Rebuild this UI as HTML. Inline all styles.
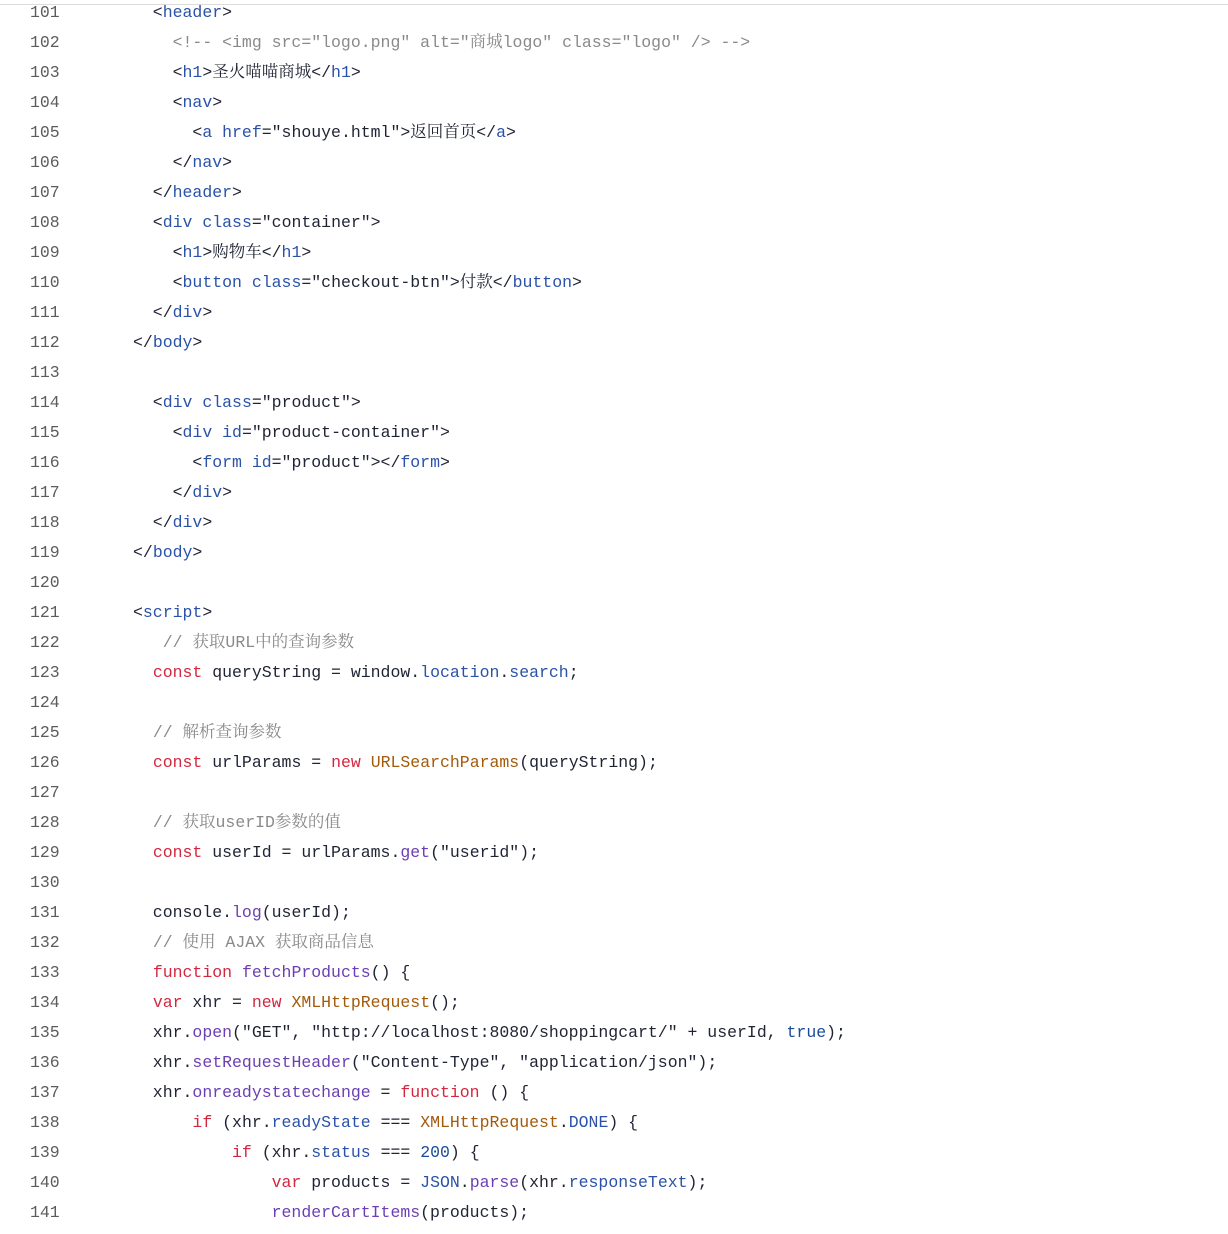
<!DOCTYPE html>
<html><head><meta charset="utf-8"><style>
body{margin:0;background:#fff;width:1228px;height:1234px;overflow:hidden;position:relative}
.top{position:absolute;left:0;top:4px;width:1228px;height:1px;background:#dcdcdc}
.code{position:absolute;left:0;top:-2px;font-family:"Liberation Mono","Noto Serif CJK SC",monospace;font-size:16.5px;line-height:30px;color:#1f2333}
.l{white-space:pre;height:30px}
.n{display:inline-block;width:133px;padding-left:30px;box-sizing:border-box;color:#5c5c5c;font-family:"Liberation Mono",monospace}
.t{color:#2a52a8}.k{color:#d3273f}.c{color:#8a8a8a}.p{color:#2a52a8}.f{color:#6b3fb3}.o{color:#a35a0a}.s{color:#1f2333}.m{color:#1a4a9a}
</style></head><body><div class="top"></div><div class="code">
<div class="l"><span class="n">101</span>  &lt;<span class="t">header</span>&gt;</div>
<div class="l"><span class="n">102</span>    <span class="c">&lt;!-- &lt;img src="logo.png" alt="商城logo" class="logo" /&gt; --&gt;</span></div>
<div class="l"><span class="n">103</span>    &lt;<span class="t">h1</span>&gt;圣火喵喵商城&lt;/<span class="t">h1</span>&gt;</div>
<div class="l"><span class="n">104</span>    &lt;<span class="t">nav</span>&gt;</div>
<div class="l"><span class="n">105</span>      &lt;<span class="t">a</span> <span class="t">href</span>="shouye.html"&gt;返回首页&lt;/<span class="t">a</span>&gt;</div>
<div class="l"><span class="n">106</span>    &lt;/<span class="t">nav</span>&gt;</div>
<div class="l"><span class="n">107</span>  &lt;/<span class="t">header</span>&gt;</div>
<div class="l"><span class="n">108</span>  &lt;<span class="t">div</span> <span class="t">class</span>="container"&gt;</div>
<div class="l"><span class="n">109</span>    &lt;<span class="t">h1</span>&gt;购物车&lt;/<span class="t">h1</span>&gt;</div>
<div class="l"><span class="n">110</span>    &lt;<span class="t">button</span> <span class="t">class</span>="checkout-btn"&gt;付款&lt;/<span class="t">button</span>&gt;</div>
<div class="l"><span class="n">111</span>  &lt;/<span class="t">div</span>&gt;</div>
<div class="l"><span class="n">112</span>&lt;/<span class="t">body</span>&gt;</div>
<div class="l"><span class="n">113</span></div>
<div class="l"><span class="n">114</span>  &lt;<span class="t">div</span> <span class="t">class</span>="product"&gt;</div>
<div class="l"><span class="n">115</span>    &lt;<span class="t">div</span> <span class="t">id</span>="product-container"&gt;</div>
<div class="l"><span class="n">116</span>      &lt;<span class="t">form</span> <span class="t">id</span>="product"&gt;&lt;/<span class="t">form</span>&gt;</div>
<div class="l"><span class="n">117</span>    &lt;/<span class="t">div</span>&gt;</div>
<div class="l"><span class="n">118</span>  &lt;/<span class="t">div</span>&gt;</div>
<div class="l"><span class="n">119</span>&lt;/<span class="t">body</span>&gt;</div>
<div class="l"><span class="n">120</span></div>
<div class="l"><span class="n">121</span>&lt;<span class="t">script</span>&gt;</div>
<div class="l"><span class="n">122</span>   <span class="c">// 获取URL中的查询参数</span></div>
<div class="l"><span class="n">123</span>  <span class="k">const</span> queryString = window.<span class="p">location</span>.<span class="p">search</span>;</div>
<div class="l"><span class="n">124</span></div>
<div class="l"><span class="n">125</span>  <span class="c">// 解析查询参数</span></div>
<div class="l"><span class="n">126</span>  <span class="k">const</span> urlParams = <span class="k">new</span> <span class="o">URLSearchParams</span>(queryString);</div>
<div class="l"><span class="n">127</span></div>
<div class="l"><span class="n">128</span>  <span class="c">// 获取userID参数的值</span></div>
<div class="l"><span class="n">129</span>  <span class="k">const</span> userId = urlParams.<span class="f">get</span>("userid");</div>
<div class="l"><span class="n">130</span></div>
<div class="l"><span class="n">131</span>  console.<span class="f">log</span>(userId);</div>
<div class="l"><span class="n">132</span>  <span class="c">// 使用 AJAX 获取商品信息</span></div>
<div class="l"><span class="n">133</span>  <span class="k">function</span> <span class="f">fetchProducts</span>() {</div>
<div class="l"><span class="n">134</span>  <span class="k">var</span> xhr = <span class="k">new</span> <span class="o">XMLHttpRequest</span>();</div>
<div class="l"><span class="n">135</span>  xhr.<span class="f">open</span>("GET", "http://localhost:8080/shoppingcart/" + userId, <span class="m">true</span>);</div>
<div class="l"><span class="n">136</span>  xhr.<span class="f">setRequestHeader</span>("Content-Type", "application/json");</div>
<div class="l"><span class="n">137</span>  xhr.<span class="f">onreadystatechange</span> = <span class="k">function</span> () {</div>
<div class="l"><span class="n">138</span>      <span class="k">if</span> (xhr.<span class="p">readyState</span> === <span class="o">XMLHttpRequest</span>.<span class="p">DONE</span>) {</div>
<div class="l"><span class="n">139</span>          <span class="k">if</span> (xhr.<span class="p">status</span> === <span class="m">200</span>) {</div>
<div class="l"><span class="n">140</span>              <span class="k">var</span> products = <span class="p">JSON</span>.<span class="f">parse</span>(xhr.<span class="p">responseText</span>);</div>
<div class="l"><span class="n">141</span>              <span class="f">renderCartItems</span>(products);</div>
</div></body></html>
